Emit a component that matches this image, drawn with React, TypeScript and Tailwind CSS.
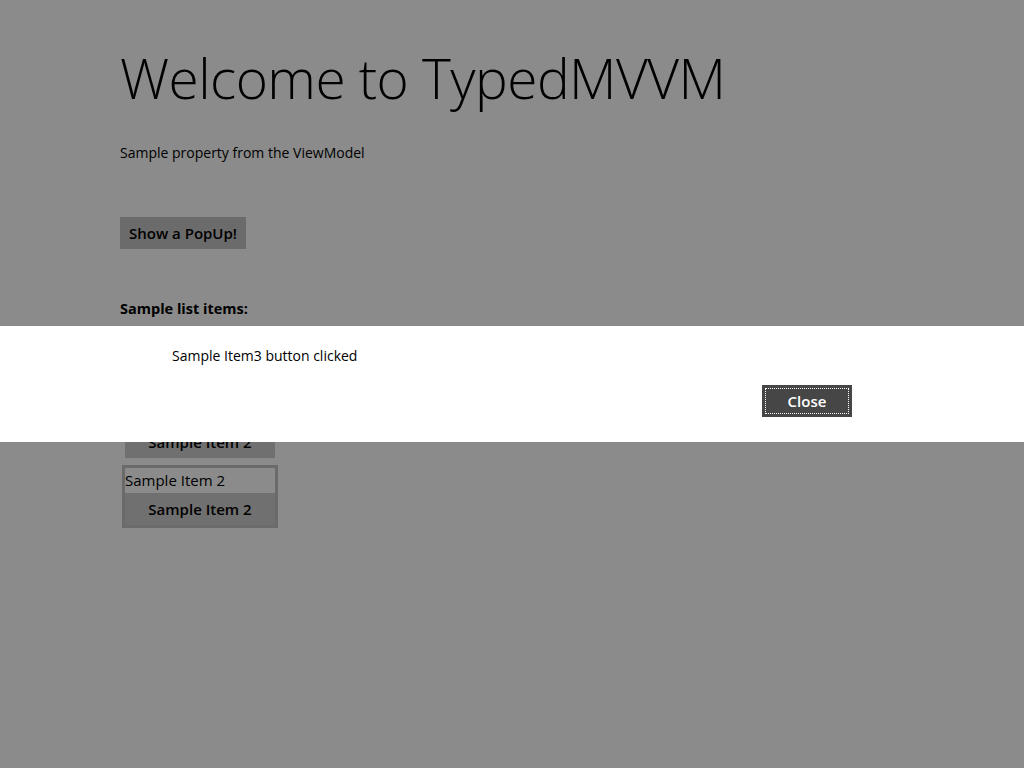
import React from "react";

function Item({ selected, hideRow, hideAll }: { selected?: boolean; hideRow?: boolean; hideAll?: boolean }) {
  return (
    <div
      className={`w-[156px] border-[3px] ${selected ? "border-[#6a6a6a]" : "border-transparent"} ${hideAll ? "invisible" : ""}`}
    >
      <div className={`h-[25px] text-[15px] leading-[25px] text-black ${hideRow ? "invisible" : ""}`}>Sample Item 2</div>
      <button className="block h-[32px] w-full bg-[#707070] text-[15px] font-semibold text-black">
        Sample Item 2
      </button>
    </div>
  );
}

export default function App() {
  return (
    <div className="relative h-[768px] w-[1024px] overflow-hidden bg-[#8b8b8b] font-['Open_Sans',sans-serif]">
      <div className="flex flex-col pl-[120px]">
        <h1 className="mt-[50px] text-[55px] font-light leading-none tracking-[-0.55px] text-black">
          Welcome to TypedMVVM
        </h1>
        <p className="mt-[38px] text-[14px] leading-[20px] text-black">
          Sample property from the ViewModel
        </p>
        <div className="mt-[54px]">
          <button className="h-[32px] w-[126px] bg-[#6b6b6b] text-[15px] font-semibold text-black">
            Show a PopUp!
          </button>
        </div>
        <p className="mt-[50px] text-[14.5px] font-bold leading-[20px] text-black">Sample list items:</p>
        <div className="mt-[12px] flex flex-col gap-[4px] pl-[2px]">
          <Item hideAll />
          <Item hideRow />
          <Item selected />
        </div>
      </div>

      <div className="absolute left-0 top-[326px] h-[116px] w-full bg-white">
        <div className="flex h-full flex-col">
          <p className="ml-[172px] mt-[20px] text-[14px] leading-[20px] text-black">
            Sample Item3 button clicked
          </p>
          <div className="mt-[19px] flex pl-[762px]">
            <button className="relative flex h-[32px] w-[90px] items-center justify-center bg-[#464646] text-[15px] font-semibold text-white">
              <span className="absolute inset-[3px] border border-dotted border-white" />
              Close
            </button>
          </div>
        </div>
      </div>
    </div>
  );
}
